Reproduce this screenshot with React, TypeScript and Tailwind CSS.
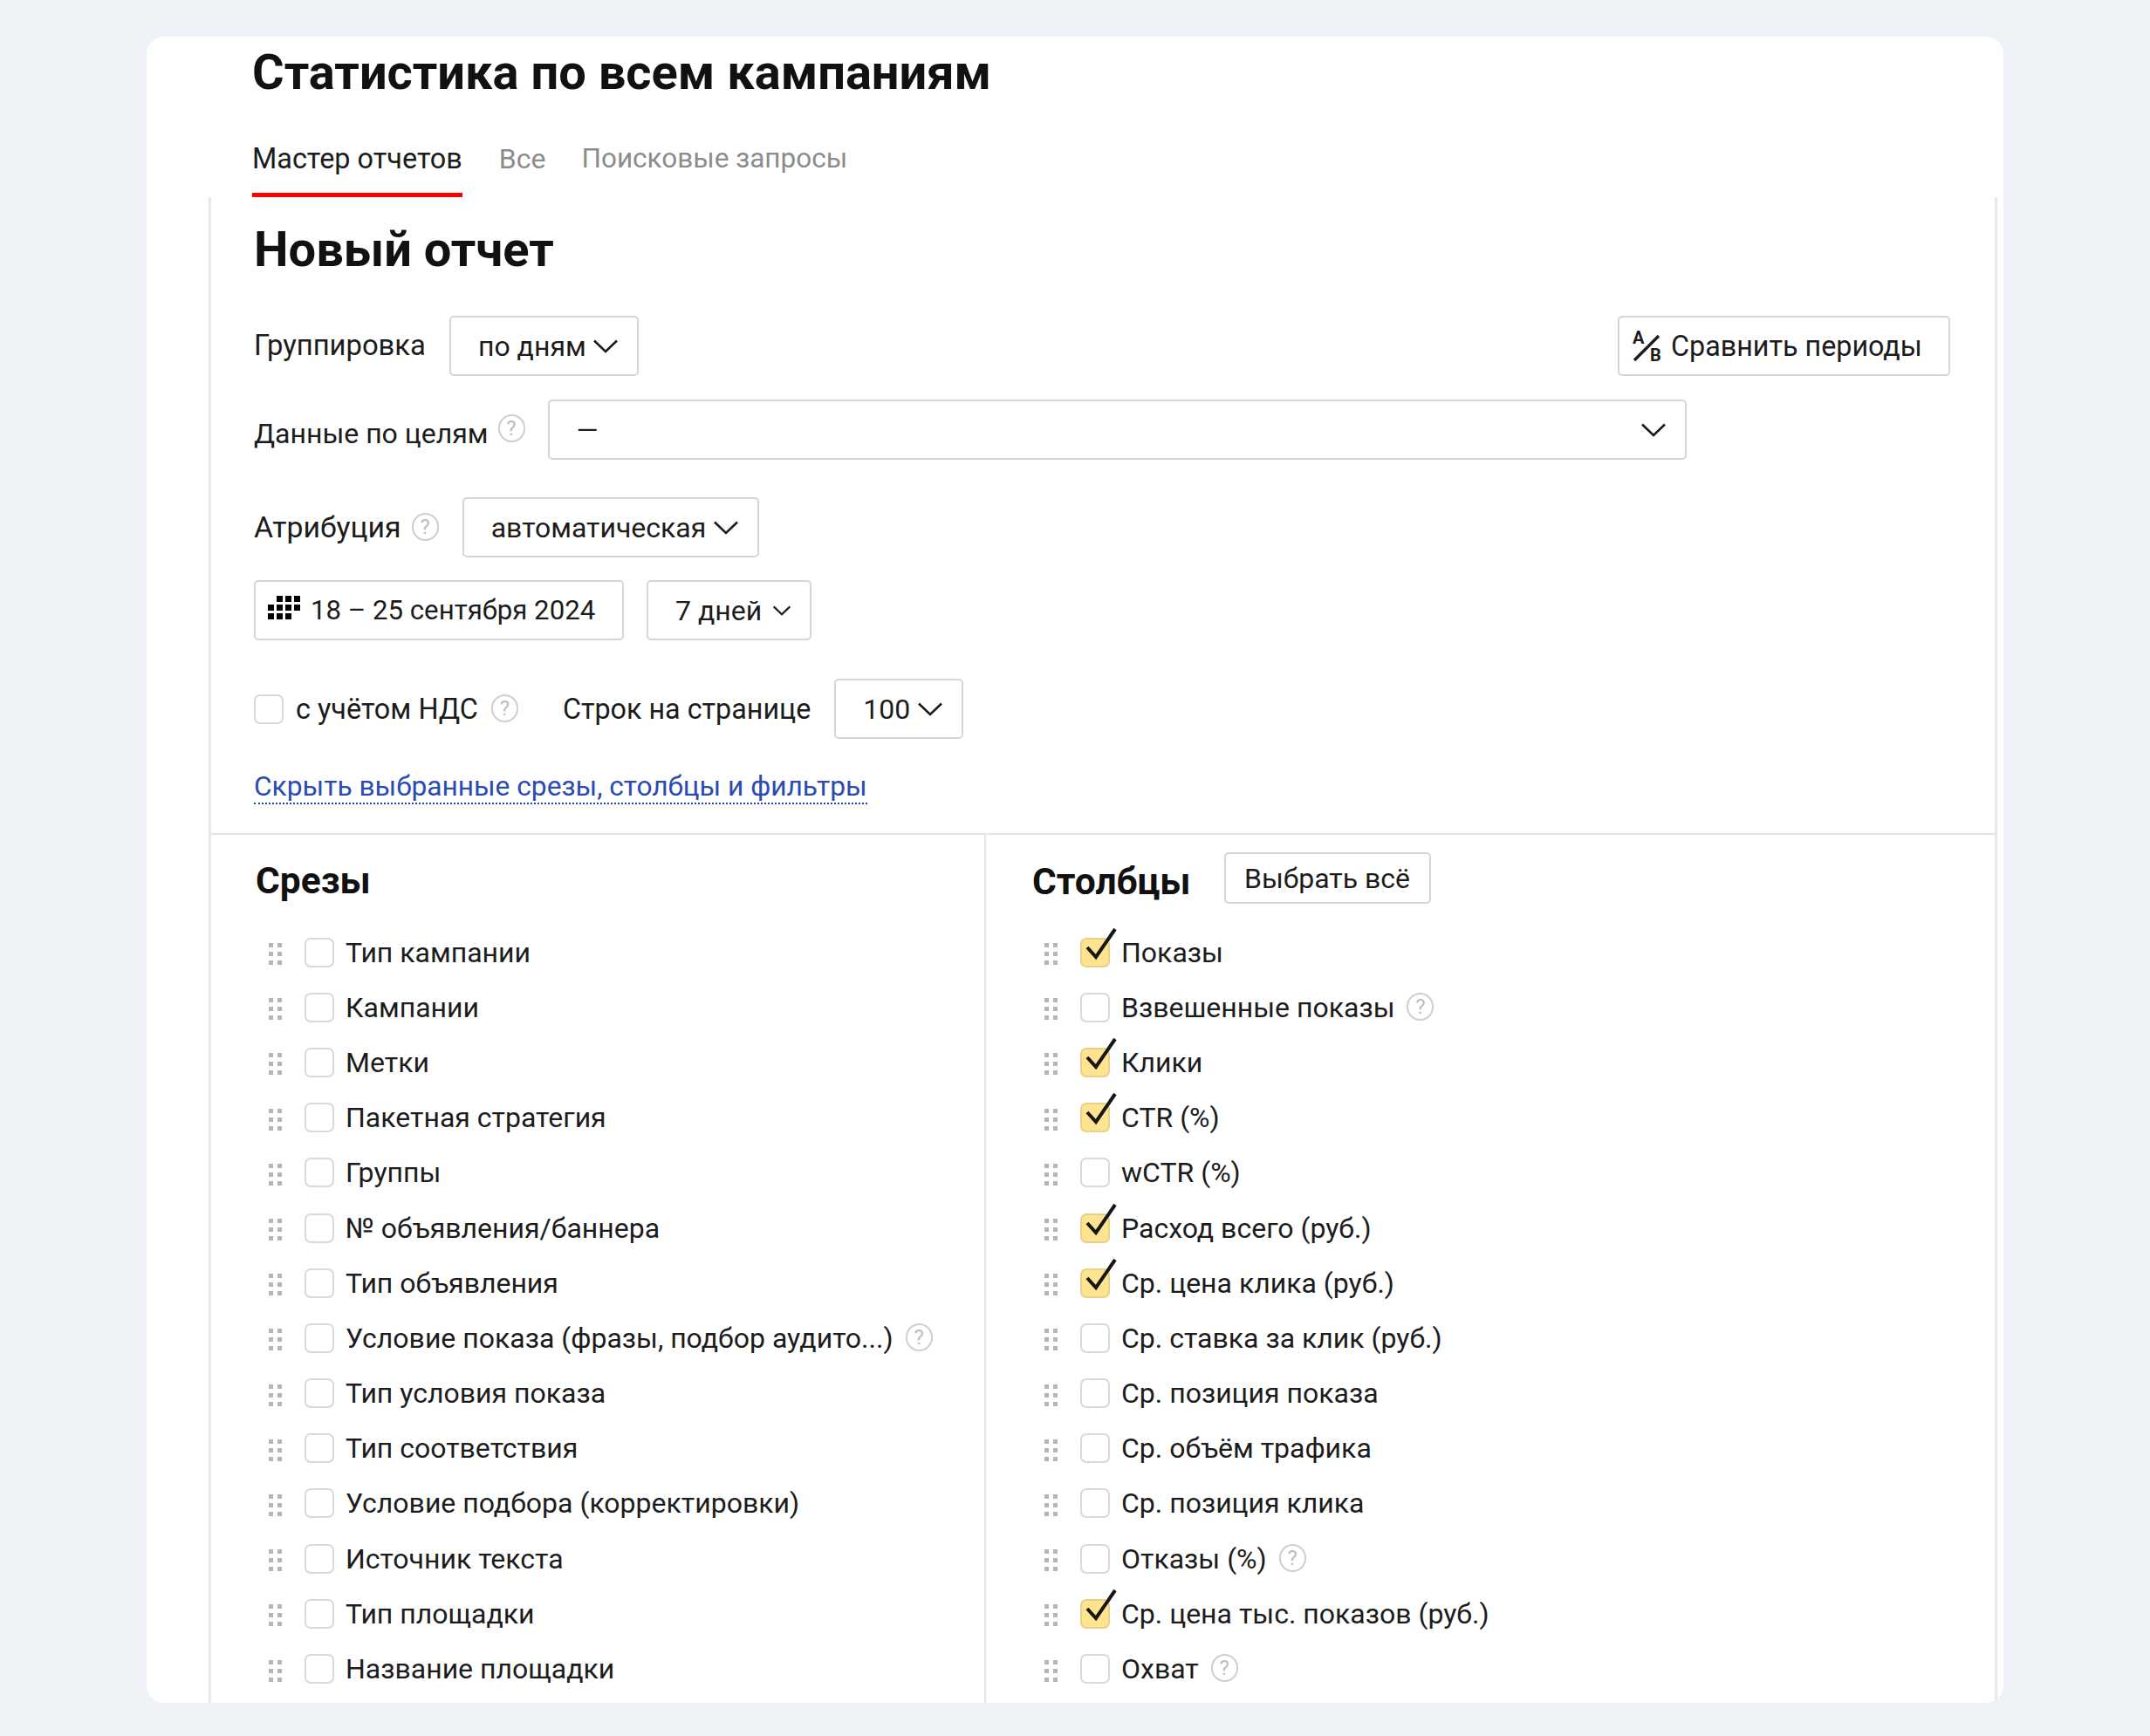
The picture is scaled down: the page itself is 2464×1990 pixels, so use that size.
import React from 'react';

type Item = { label: string; checked?: boolean; help?: boolean };

const slices: Item[] = [
  { label: 'Тип кампании' },
  { label: 'Кампании' },
  { label: 'Метки' },
  { label: 'Пакетная стратегия' },
  { label: 'Группы' },
  { label: '№ объявления/баннера' },
  { label: 'Тип объявления' },
  { label: 'Условие показа (фразы, подбор аудито...)', help: true },
  { label: 'Тип условия показа' },
  { label: 'Тип соответствия' },
  { label: 'Условие подбора (корректировки)' },
  { label: 'Источник текста' },
  { label: 'Тип площадки' },
  { label: 'Название площадки' },
];

const columns: Item[] = [
  { label: 'Показы', checked: true },
  { label: 'Взвешенные показы', help: true },
  { label: 'Клики', checked: true },
  { label: 'CTR (%)', checked: true },
  { label: 'wCTR (%)' },
  { label: 'Расход всего (руб.)', checked: true },
  { label: 'Ср. цена клика (руб.)', checked: true },
  { label: 'Ср. ставка за клик (руб.)' },
  { label: 'Ср. позиция показа' },
  { label: 'Ср. объём трафика' },
  { label: 'Ср. позиция клика' },
  { label: 'Отказы (%)', help: true },
  { label: 'Ср. цена тыс. показов (руб.)', checked: true },
  { label: 'Охват', help: true },
];

function Help({ className = '' }: { className?: string }) {
  return (
    <span className={`flex h-[32px] w-[31px] shrink-0 items-center justify-center rounded-full border-2 border-[#cfcfcf] text-[24px] leading-none text-[#bdbdbd] ${className}`}>
      ?
    </span>
  );
}

function Chevron({ small }: { small?: boolean }) {
  return (
    <svg className={small ? 'h-[12px] w-[20px] shrink-0' : 'h-[16px] w-[28px] shrink-0'} viewBox="0 0 28 16" fill="none">
      <path d="M1 1.5 L14 14 L27 1.5" stroke="#1c1c1c" strokeWidth={small ? 3 : 2.6} />
    </svg>
  );
}

function Checkbox({ checked }: { checked?: boolean }) {
  return (
    <span className={`relative block h-[34px] w-[34px] shrink-0 rounded-[7px] border-2 ${checked ? 'border-[#e8d08a] bg-[#ffe48f]' : 'border-[#d9d9d9] bg-white'}`}>
      {checked && (
        <svg className="absolute left-[-2px] top-[-14px] h-[38px] w-[44px] overflow-visible" viewBox="0 0 44 38" fill="none">
          <path d="M8 23 L18 34 L40 2" stroke="#161616" strokeWidth="4" />
        </svg>
      )}
    </span>
  );
}

function Grip() {
  return (
    <span className="grid h-[25px] w-[15px] translate-y-[2px] grid-cols-2 gap-x-[5px] gap-y-[5px]">
      {[0, 1, 2, 3, 4, 5].map((i) => (
        <span key={i} className="h-[5px] w-[5px] bg-[#b5b5b5]" />
      ))}
    </span>
  );
}

function Row({ item }: { item: Item }) {
  return (
    <div className="flex h-[63.2px] items-center">
      <Grip />
      <span className="ml-[26px]">
        <Checkbox checked={item.checked} />
      </span>
      <span className="ml-[13px] whitespace-nowrap">{item.label}</span>
      {item.help && <Help className="ml-[14px] -translate-y-[1px]" />}
    </div>
  );
}

function Select({ label, className = '', small }: { label: string; className?: string; small?: boolean }) {
  return (
    <button className={`flex h-[69px] shrink-0 items-center justify-between rounded-[5px] border-2 border-[#d6d6d6] bg-white pl-[31px] pr-[22px] ${className}`}>
      <span className="whitespace-nowrap">{label}</span>
      <Chevron small={small} />
    </button>
  );
}

export default function App() {
  return (
    <div className="h-[1990px] bg-[#eff2f6] px-[168px] pt-[42px] font-['Roboto',sans-serif] text-[32px] leading-[40px] text-[#1c1c1c]">
      <div className="h-[1910px] overflow-hidden rounded-[20px] bg-white">
        {/* Header */}
        <div className="h-[184px] pl-[121px]">
          <h1 className="pt-[14px] text-[56px] font-bold leading-[54px] text-[#111]">Статистика по всем кампаниям</h1>
          <nav className="mt-[38px] flex gap-[42px]">
            <div className="h-[78px] border-b-[5px] border-[#f00] pt-[14px] text-[32.4px]">Мастер отчетов</div>
            <div className="pt-[14px] text-[#8c8c8c]">Все</div>
            <div className="-ml-[1px] pt-[14px] text-[31.5px] text-[#8c8c8c]">Поисковые запросы</div>
          </nav>
        </div>

        {/* Report panel */}
        <div className="ml-[71px] mr-[7px] flex h-[1726px] flex-col overflow-hidden border-x-[3px] border-[#e8e8e8]">
          <div className="border-b-2 border-[#e6e6e6] pb-[33px] pl-[49px]">
            <h2 className="pt-[30px] text-[56px] font-bold leading-[60px] text-[#111]">Новый отчет</h2>

            <div className="mt-[46px] flex items-center pr-[51px]">
              <span className="-translate-y-[1px] text-[32.8px]">Группировка</span>
              <Select label="по дням" className="ml-[27px] w-[217px]" />
              <button className="ml-auto flex h-[69px] w-[381px] items-center gap-[5px] rounded-[5px] border-2 border-[#d6d6d6] pl-[14px]">
                <svg className="h-[40px] w-[40px] overflow-visible" viewBox="0 0 40 40" fill="none">
                  <path d="M3 36 L31 8" stroke="#1c1c1c" strokeWidth="3.4" />
                  <text x="1" y="17" fontSize="20" fontWeight="700" fill="#1c1c1c">A</text>
                  <text x="21" y="37" fontSize="20" fontWeight="700" fill="#1c1c1c">B</text>
                </svg>
                <span className="whitespace-nowrap text-[32.3px]">Сравнить периоды</span>
              </button>
            </div>

            <div className="mt-[27px] flex items-center">
              <span className="translate-y-[4px]">Данные по целям</span>
              <Help className="ml-[11px] -translate-y-[2px]" />
              <div className="ml-[26px] flex h-[69px] w-[1305px] items-center justify-between rounded-[5px] border-2 border-[#d6d6d6] pl-[31px] pr-[22px]">
                <span>—</span>
                <Chevron />
              </div>
            </div>

            <div className="mt-[43px] flex items-center">
              <span className="text-[33.8px]">Атрибуция</span>
              <Help className="ml-[12px] -translate-y-[1px]" />
              <Select label="автоматическая" className="ml-[27px] w-[340px]" />
            </div>

            <div className="mt-[26px] flex items-center">
              <div className="flex h-[69px] w-[424px] items-center gap-[12px] rounded-[5px] border-2 border-[#d6d6d6] pl-[14px]">
                <svg className="h-[27px] w-[37px] -translate-y-[3px]" viewBox="0 0 37 27" fill="#000">
                  <rect x="10" y="0" width="7" height="7" />
                  <rect x="20" y="0" width="7" height="7" />
                  <rect x="30" y="0" width="7" height="7" />
                  <rect x="0" y="10" width="7" height="7" />
                  <rect x="10" y="10" width="7" height="7" />
                  <rect x="20" y="10" width="7" height="7" />
                  <rect x="30" y="10" width="7" height="7" />
                  <rect x="0" y="20" width="7" height="7" />
                  <rect x="10" y="20" width="7" height="7" />
                  <rect x="20" y="20" width="7" height="7" />
                </svg>
                <span className="whitespace-nowrap text-[31.2px]">18 – 25 сентября 2024</span>
              </div>
              <Select label="7 дней" small className="ml-[26px] w-[189px]" />
            </div>

            <div className="mt-[44px] flex items-center">
              <Checkbox />
              <span className="ml-[14px] text-[32.4px]">с учётом НДС</span>
              <Help className="ml-[15px] -translate-y-[1px]" />
              <span className="ml-[51px] text-[32.3px]">Строк на странице</span>
              <Select label="100" className="ml-[27px] w-[148px]" />
            </div>

            <div className="mt-[34px]">
              <a className="border-b-2 border-dotted border-[#1f3fb0] text-[31.7px] text-[#2a4bb0]">Скрыть выбранные срезы, столбцы и фильтры</a>
            </div>
          </div>

          <div className="grid flex-1 grid-cols-[888px_1fr]">
            <div className="border-r-2 border-[#e6e6e6] pl-[51px]">
              <h3 className="mb-[22px] flex h-[81px] items-center pt-[25px] text-[42.5px] font-bold text-[#111]">Срезы</h3>
              <div className="pl-[15px]">
                {slices.map((s) => (
                  <Row key={s.label} item={s} />
                ))}
              </div>
            </div>
            <div className="pl-[53px]">
              <div className="mb-[22px] flex h-[81px] items-center gap-[38px] pt-[18px]">
                <h3 className="pt-[9px] text-[42.5px] font-bold text-[#111]">Столбцы</h3>
                <button className="h-[59px] w-[237px] rounded-[5px] border-2 border-[#d6d6d6]">Выбрать всё</button>
              </div>
              <div className="pl-[14px]">
                {columns.map((c) => (
                  <Row key={c.label} item={c} />
                ))}
              </div>
            </div>
          </div>
        </div>
      </div>
    </div>
  );
}
